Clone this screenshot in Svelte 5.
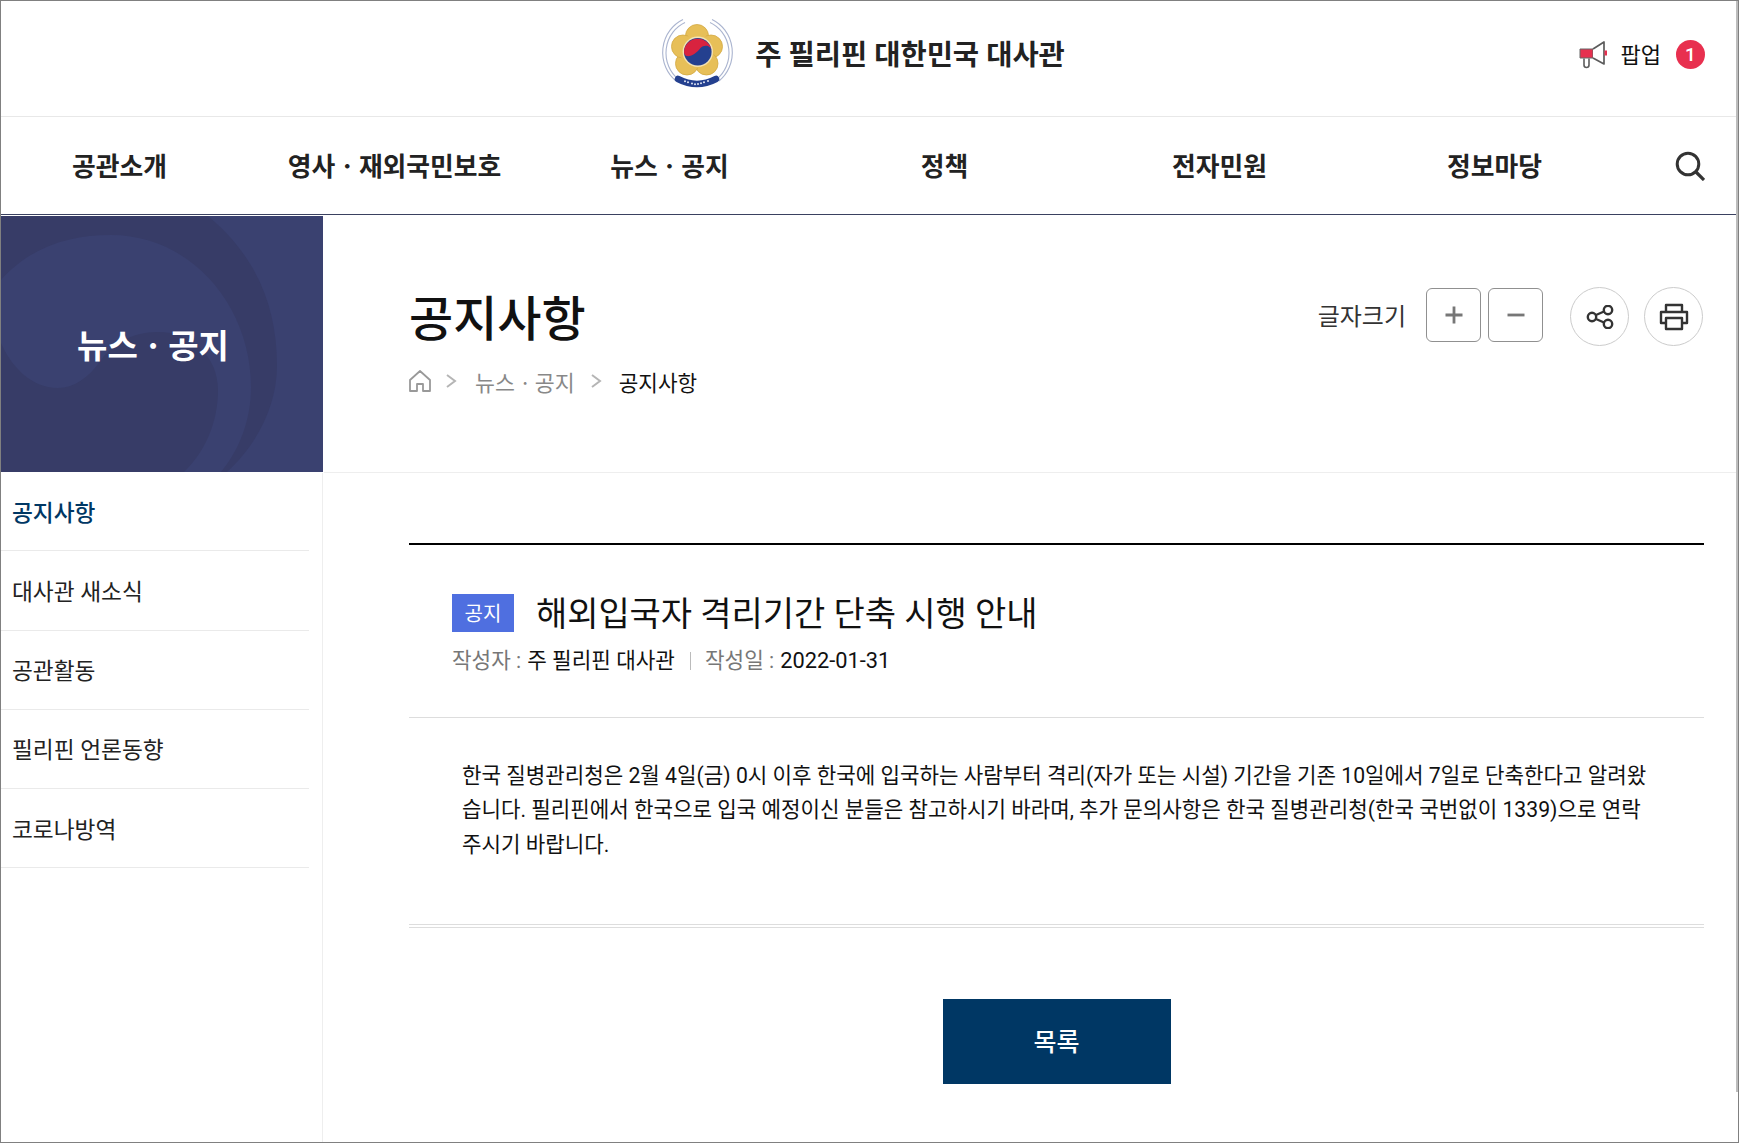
<script>
  const gnb = ['공관소개', '영사ㆍ재외국민보호', '뉴스ㆍ공지', '정책', '전자민원', '정보마당'];
  const side = ['공지사항', '대사관 새소식', '공관활동', '필리핀 언론동향', '코로나방역'];
  const petals = [[44, 25], [58, 35.5], [53.5, 52.5], [34, 52.5], [30, 35.5]];
  const bandDots = [33, 36, 40, 43, 46, 49, 52, 56];
</script>

<div class="page">
  <span class="bar" aria-hidden="true"></span>
  <header class="top">
    <a class="brand" href="#top">
      <svg class="emblem" viewBox="0 0 90 85" width="90" height="85" aria-hidden="true">
        <g fill="none" stroke="#aab4cf" stroke-width="1.1">
          <path d="M30 8.5 A35.5 36.5 0 0 0 23 70"/>
          <path d="M32 11.5 A32.5 33.5 0 0 0 25 68"/>
          <path d="M59 8.5 A35.5 36.5 0 0 1 66 70"/>
          <path d="M57 11.5 A32.5 33.5 0 0 1 64 68"/>
        </g>
        <g fill="#e7bf58" stroke="#d3a945" stroke-width="0.8">
          {#each petals as p}
            <circle cx={p[0]} cy={p[1]} r="11.5"/>
          {/each}
        </g>
        <circle cx="44" cy="40" r="17" fill="#e7bf58"/>
        <circle cx="44.8" cy="40.7" r="15.2" fill="#f3e2b4"/>
        <circle cx="44.8" cy="40.7" r="13.8" fill="#24408f"/>
        <path d="M31 40.7 A13.8 13.8 0 0 1 58.5 40 C58.5 35 51.5 33 47.5 37 C43.5 42 38.5 46 33.5 45 C31.5 44 31 42 31 40.7Z" fill="#d8233f"/>
        <path d="M25 68 Q44 78 63 68" fill="none" stroke="#24408f" stroke-width="6.5" stroke-linecap="round"/>
        <g fill="#dfe4f2">
          {#each bandDots as x}
            <circle cx={x - 1} cy={73.5 - Math.abs(x - 44) * 0.22 - Math.abs(x - 44) * Math.abs(x - 44) * 0.006} r="1"/>
          {/each}
        </g>
      </svg>
      <span class="brandname">주 필리핀 대한민국 대사관</span>
    </a>
    <div class="popup">
      <svg viewBox="0 0 50 40" width="50" height="40" aria-hidden="true">
        <path d="M10 15 H23 V24 H10Z" fill="#e6304f" stroke="#666" stroke-width="1"/>
        <path d="M23 15 L34 8 V30 L23 24" fill="#fff" stroke="#5c5c5c" stroke-width="1.7" stroke-linejoin="round"/>
        <rect x="34.5" y="16.5" width="2.5" height="5" fill="#e6304f"/>
        <path d="M14 24.5 V31 Q14 33.5 16.5 33.5 Q19 33.5 19 31 V24.5" fill="none" stroke="#5c5c5c" stroke-width="1.6"/>
      </svg>
      <span class="poplabel">팝업</span>
      <span class="badge">1</span>
    </div>
  </header>

  <nav class="gnb">
    {#each gnb as item}
      <a href="#top">{item}</a>
    {/each}
    <button class="search" aria-label="검색">
      <svg viewBox="0 0 30 30" width="30" height="30"><circle cx="13" cy="13" r="10.8" fill="none" stroke="#333" stroke-width="3"/><path d="M21 21 L29 29" stroke="#333" stroke-width="3.2"/></svg>
    </button>
  </nav>

  <div class="body">
    <aside class="lnb">
      <div class="banner">
        <svg class="swirl" viewBox="0 0 322 256" preserveAspectRatio="none" aria-hidden="true">
          <rect width="322" height="256" fill="#3a4170"/>
          <path d="M0 0 H207 C255 40 276 90 276 150 C276 190 255 230 226 256 H0Z" fill="#373c67"/>
          <path d="M0 64 C30 30 70 19 110 19 C190 19 250 90 250 171 C250 205 238 234 220 256 H183 C205 235 217 205 217 174 C217 140 190 116 157 116 C130 116 112 128 100 144 C88 162 72 172 57 172 C30 172 10 150 0 127Z" fill="#3a4170"/>
        </svg>
        <strong>뉴스ㆍ공지</strong>
      </div>
      <ul>
        {#each side as s, i}
          <li class:on={i === 0}><a href="#top">{s}</a></li>
        {/each}
      </ul>
    </aside>

    <main class="main">
      <section class="head">
        <div>
          <h1>공지사항</h1>
          <div class="crumb">
            <svg class="home" viewBox="0 0 24 24" width="24" height="24" aria-hidden="true"><path d="M2 11 L12 2 L22 11 V22 H15 V15 H9 V22 H2Z" fill="none" stroke="#999" stroke-width="1.8" stroke-linejoin="round"/></svg>
            <svg class="chev" viewBox="0 0 12 14" width="12" height="14" aria-hidden="true"><path d="M2 1 L10 7 L2 13" fill="none" stroke="#b5b5b5" stroke-width="2"/></svg>
            <span class="grey">뉴스ㆍ공지</span>
            <svg class="chev" viewBox="0 0 12 14" width="12" height="14" aria-hidden="true"><path d="M2 1 L10 7 L2 13" fill="none" stroke="#b5b5b5" stroke-width="2"/></svg>
            <span class="cur">공지사항</span>
          </div>
        </div>
        <div class="tools">
          <span class="fs">글자크기</span>
          <button class="sq" aria-label="글자 크게"><svg viewBox="0 0 20 20" width="20" height="20"><path d="M10 1.5 V18.5 M1.5 10 H18.5" stroke="#777" stroke-width="2.8"/></svg></button>
          <button class="sq" aria-label="글자 작게"><svg viewBox="0 0 20 20" width="20" height="20"><path d="M1.5 10 H18.5" stroke="#777" stroke-width="2.8"/></svg></button>
          <button class="rd share" aria-label="공유"><svg viewBox="0 0 28 24" width="28" height="24" fill="none" stroke="#333" stroke-width="2.4"><circle cx="6" cy="12" r="4.2"/><circle cx="22" cy="5" r="4.2"/><circle cx="22" cy="19" r="4.2"/><path d="M10 10 L18 6.5 M10 14 L18 17.5"/></svg></button>
          <button class="rd" aria-label="인쇄"><svg viewBox="0 0 30 28" width="30" height="28" fill="none" stroke="#333" stroke-width="2.4" stroke-linejoin="round"><path d="M7 9 V2 H23 V9"/><path d="M7 20 H2 V9 H28 V20 H23"/><path d="M7 15 H23 V26 H7Z"/></svg></button>
        </div>
      </section>

      <section class="view">
        <div class="vhead">
          <div class="vtitle"><span class="tag">공지</span><h2>해외입국자 격리기간 단축 시행 안내</h2></div>
          <div class="meta"><span class="k">작성자 :</span> 주 필리핀 대사관<i></i><span class="k">작성일 :</span> <span class="date">2022-01-31</span></div>
        </div>
        <p class="content">한국 질병관리청은 2월 4일(금) 0시 이후 한국에 입국하는 사람부터 격리(자가 또는 시설) 기간을 기존 10일에서 7일로 단축한다고 알려왔습니다. 필리핀에서 한국으로 입국 예정이신 분들은 참고하시기 바라며, 추가 문의사항은 한국 질병관리청(한국 국번없이 1339)으로 연락주시기 바랍니다.</p>
        <div class="actions"><a class="list" href="#top">목록</a></div>
      </section>
    </main>
  </div>
</div>

<style>
  :global(body) { margin: 0; background: #fff; }
  * { box-sizing: border-box; }
  a { color: inherit; text-decoration: none; }
  button { padding: 0; background: #fff; cursor: pointer; display: flex; align-items: center; justify-content: center; }
  h1, h2, p, ul { margin: 0; padding: 0; }
  ul { list-style: none; }

  .page {
    width: 1739px; height: 1143px; position: relative;
    border: 1px solid #808080; overflow: hidden;
    font-family: Roboto, "Noto Sans CJK KR", sans-serif; color: #111;
  }
  .bar { position: absolute; right: 0; top: 0; width: 2px; height: 1091px; background: #bdbdbd; z-index: 2; }
  .top { height: 116px; border-bottom: 1px solid #e8e8e8; display: flex; justify-content: center; align-items: center; position: relative; padding: 0 21px 11px 0; }
  .brand { display: flex; align-items: center; gap: 12px; font-size: 28.5px; font-weight: 700; color: #222; }
  .brandname { padding-bottom: 2px; }
  .emblem { display: block; }
  .popup { position: absolute; right: 33px; top: 33px; display: flex; align-items: center; }
  .poplabel { font-size: 22px; margin-right: 15px; padding-bottom: 2px; color: #111; }
  .popup svg { margin-right: 1px; }
  .badge { width: 29px; height: 29px; border-radius: 50%; background: #e8304f; color: #fff; font-size: 19px; font-weight: 500; display: flex; align-items: center; justify-content: center; }

  .gnb { height: 98px; padding-bottom: 2px; border-bottom: 1px solid #3a4160; display: grid; grid-template-columns: repeat(6, 237px); column-gap: 38px; align-items: center; position: relative; }
  .gnb a { text-align: center; font-size: 25.8px; font-weight: 700; color: #222; }
  .search { position: absolute; right: 33px; top: 34px; border: 0; }

  .body { display: flex; }
  .lnb { width: 322px; flex: none; }
  .banner { height: 256px; margin-top: 1px; position: relative; display: flex; align-items: center; justify-content: center; padding-right: 18px; }
  .swirl { position: absolute; inset: 0; width: 100%; height: 100%; }
  .banner strong { position: relative; color: #fff; font-size: 33px; font-weight: 700; }
  .lnb ul { width: 308px; }
  .lnb li { height: 79.25px; border-bottom: 1px solid #eaeaea; padding: 0 0 0 11px; display: flex; align-items: center; font-size: 22.7px; color: #222; }
  .lnb li.on { color: #003764; font-weight: 500; }

  .main { flex: 1; min-width: 0; border-left: 1px solid #eee; margin-top: 258px; margin-left: -1px; height: 700px; position: relative; }
  .head { position: absolute; left: 1px; right: 0; top: -258px; height: 258px; background: #fff; border-bottom: 1px solid #eee; padding: 73px 35px 0 85px; display: flex; justify-content: space-between; align-items: flex-start; }
  h1 { font-size: 48px; font-weight: 500; line-height: 64px; color: #111; }
  .crumb { display: flex; align-items: center; margin-top: 14px; font-size: 21.7px; height: 30px; }
  .home { margin: 0 -2px 0 -1px; }
  .chev { margin: 0 18px 0 15px; }
  .grey { color: #888; }
  .cur { font-size: 21.3px; margin-left: -1px; }
  .tools { display: flex; align-items: center; margin-top: -1px; }
  .fs { font-size: 24px; color: #333; margin: 0 20px 5px 0; }
  .sq { width: 55px; height: 54px; border: 1.5px solid #909090; border-radius: 6px; margin: 0 7px 3px 0; }
  .rd { width: 59px; height: 59px; border: 1px solid #ccc; border-radius: 50%; }
  .share { margin-left: 20px; margin-right: 15px; }

  .view { padding: 70px 34px 0 86px; }
  .vhead { border-top: 2px solid #000; border-bottom: 1px solid #ddd; padding: 47px 43px 0; height: 175px; }
  .vtitle { display: flex; align-items: center; }
  .tag { width: 62px; height: 38px; background: #4f6fe0; color: #fff; font-size: 20px; display: flex; align-items: center; justify-content: center; }
  h2 { font-size: 34px; font-weight: 400; color: #111; margin-left: 22px; line-height: 38px; padding-top: 3px; letter-spacing: -0.08px; }
  .meta { margin-top: 13px; font-size: 21.3px; color: #111; line-height: 30px; display: flex; gap: 6px; align-items: center; }
  .meta .k { color: #777; }
  .meta i { width: 1px; height: 18px; background: #bbb; margin: 0 8px 0 9px; }
  .date { font-size: 21.8px; }
  .content { border-bottom: 4px double #ddd; padding: 41px 50px 0 53px; font-size: 21.2px; line-height: 34.4px; word-break: break-all; color: #111; height: 210px; }
  .actions { display: flex; justify-content: center; margin-top: 71px; }
  .list { width: 228px; height: 85px; padding-bottom: 3px; background: #003764; color: #fff; font-size: 25px; font-weight: 500; display: flex; align-items: center; justify-content: center; }
</style>
